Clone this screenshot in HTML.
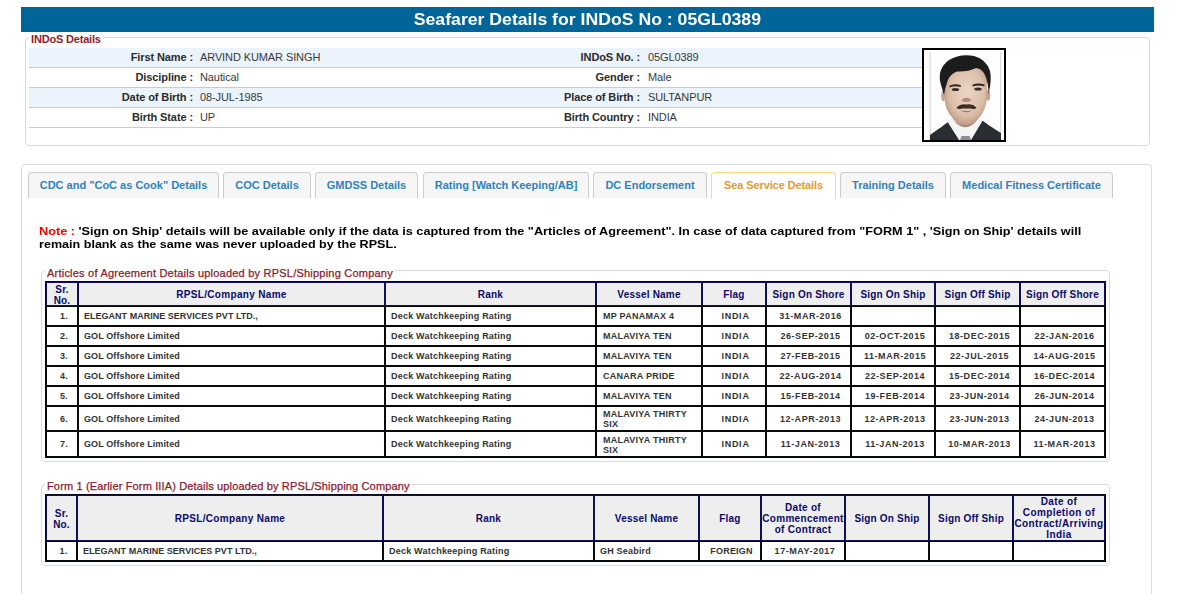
<!DOCTYPE html>
<html>
<head>
<meta charset="utf-8">
<title>Seafarer Details</title>
<style>
*{box-sizing:border-box;}
html,body{margin:0;padding:0;background:#fff;}
body{width:1194px;height:594px;overflow:hidden;position:relative;font-family:"Liberation Sans",sans-serif;font-size:11px;color:#222;}
.abs{position:absolute;}
#title{left:21px;top:7px;width:1133px;height:25px;background:#006699;color:#fff;font-weight:bold;font-size:16px;text-align:center;line-height:25px;}
#title span{display:inline-block;transform:scaleX(1.103);transform-origin:50% 50%;white-space:nowrap;}
#fs1{left:25px;top:37px;width:1125px;height:109px;border:1px solid #d9dbe0;border-radius:4px;}
#lg1{left:29px;top:33px;padding:0 2px;background:#fff;color:#8f1b2d;font-weight:bold;font-size:11px;line-height:13px;letter-spacing:-.18px;white-space:nowrap;}
.irow{left:29px;width:893px;height:20px;border-bottom:1px solid #ccc;}
.irow.alt{background:#ebf3fc;}
.irow span{position:absolute;top:0;line-height:19px;white-space:nowrap;letter-spacing:-.1px;}
.irow .l{font-weight:bold;color:#2c2c2c;text-align:right;}
.irow .l1{right:729px;}
.irow .l2{right:282px;}
.irow .v{color:#3a3a3a;}
.irow .v1{left:171px;}
.irow .v2{left:619px;}
#photo{left:922px;top:48px;width:84px;height:94px;border:2px solid #000;background:#fff;overflow:hidden;}
#tabs{left:21px;top:164px;width:1131px;height:460px;border:1px solid #dcdde0;border-radius:4px;}
.tab{top:172px;height:26px;border:1px solid #ccc;border-bottom:none;border-radius:4px 4px 0 0;background:#f6f6f6;color:#2e83bd;font-weight:bold;font-size:11px;line-height:25px;text-align:center;white-space:nowrap;}
.tab.act{background:#fff;border-color:#f8db7e;color:#e59a2e;height:27px;letter-spacing:-.1px;}
#note{left:39px;top:225px;width:1080px;font-weight:bold;font-size:11.3px;line-height:13px;color:#000;}
#note .nl{white-space:nowrap;transform-origin:0 0;height:13px;}
#note b{color:#f00;}
.fs{border:1px solid #d9dbe0;border-radius:4px;}
.lg{padding:0 2px;background:#fff;color:#8a1a2b;-webkit-text-stroke:.25px #8a1a2b;font-size:11px;line-height:13px;letter-spacing:.19px;white-space:nowrap;}
table.g{position:absolute;border-collapse:separate;border-spacing:0;border:1px solid #08081c;table-layout:fixed;font-weight:bold;}
table.g th{background:#eee;border:1px solid #101058;color:#0a0a66;font-size:10px;line-height:11px;padding:0;text-align:center;vertical-align:middle;letter-spacing:.2px;}
table.g td{background:#fff;border:1px solid #0a0a0a;color:#333;font-size:9px;line-height:10px;padding:0 0 0 5px;text-align:left;vertical-align:middle;letter-spacing:.2px;}
table.g td.n{text-align:center;padding:0 0 0 4px;}
table.g td.c{text-align:center;padding:0;}
table.g td.u{letter-spacing:.02px;}
table.g td.g{letter-spacing:.1px;}
table.g td.d{letter-spacing:.55px;text-align:center;padding:0 0 0 4px;}
table.g td.f{letter-spacing:.75px;text-align:center;padding:0 0 0 3px;}
table.g td.v{letter-spacing:.25px;padding-left:6px;}
table.g td.r{letter-spacing:.22px;}
</style>
</head>
<body>
<div id="title" class="abs"><span>Seafarer Details for INDoS No : 05GL0389</span></div>

<div id="fs1" class="abs"></div>
<div id="lg1" class="abs">INDoS Details</div>
<div class="abs irow alt" style="top:48px"><span class="l l1">First Name :</span><span class="v v1">ARVIND KUMAR SINGH</span><span class="l l2">INDoS No. :</span><span class="v v2">05GL0389</span></div>
<div class="abs irow" style="top:68px"><span class="l l1">Discipline :</span><span class="v v1">Nautical</span><span class="l l2">Gender :</span><span class="v v2">Male</span></div>
<div class="abs irow alt" style="top:88px"><span class="l l1">Date of Birth :</span><span class="v v1">08-JUL-1985</span><span class="l l2">Place of Birth :</span><span class="v v2">SULTANPUR</span></div>
<div class="abs irow" style="top:108px"><span class="l l1">Birth State :</span><span class="v v1">UP</span><span class="l l2">Birth Country :</span><span class="v v2">INDIA</span></div>
<div id="photo" class="abs"><svg width="80" height="90" viewBox="0 0 80 90" style="display:block">
<defs>
<radialGradient id="sk" cx="52%" cy="42%" r="62%"><stop offset="0" stop-color="#ead6c6"/><stop offset=".65" stop-color="#dcbfaa"/><stop offset="1" stop-color="#b48f79"/></radialGradient>
<filter id="bl" x="-10%" y="-10%" width="120%" height="120%"><feGaussianBlur stdDeviation=".55"/></filter>
</defs>
<rect width="80" height="90" fill="#fdfdfd"/>
<rect x="5.5" y="2" width="1.2" height="88" fill="#d9d9dc"/>
<rect x="76" y="2" width="1.2" height="88" fill="#dcdce0"/>
<g filter="url(#bl)">
<path d="M6 90 L6 85 Q10 82 16 78 L24 72 L28 70 L53 69 L59 71 L66 76 Q72 80 77 83 L77 90 Z" fill="#2c2d32"/>
<path d="M23 71 L29 67 L53 67 L59 70 L47 90 L35 90 Z" fill="#f4f4f7"/>
<path d="M37.5 86 L45.5 86 L47 90 L36 90 Z" fill="#8d8d96"/>
<path d="M29 58 L54 58 L54 69 Q41 80 29 69 Z" fill="#c5a089"/>
<path d="M20.5 30 Q21 17 41 16 Q62.5 17 63 30 L63 48 Q62 60 55 68 Q48 76.5 41.5 76.5 Q35 76.5 28.5 68 Q21 60 20.5 48 Z" fill="url(#sk)"/>
<ellipse cx="19.3" cy="46" rx="2" ry="5.2" fill="#c7a28c"/>
<ellipse cx="64.2" cy="45.5" rx="2" ry="5.2" fill="#c7a28c"/>
<path d="M20 45 Q18 38 16.5 33 Q13 19 25 10 Q36 3.5 50 6 Q62 9 66 21 Q68 30 64.5 44 Q64.5 33 61 25 Q58 18.5 52 18 Q44 22 33 21.5 Q26 24 23.5 31 Q21 38 20 45 Z" fill="#1b1b1d"/>
<path d="M25.5 35.8 Q31 32.8 36.8 35.3 L36.8 37 Q31 35.3 25.5 37.4 Z" fill="#2a211e"/>
<path d="M48.5 34.8 Q55 32.3 60.5 34.8 L60.5 36.4 Q55 34.6 48.5 36.6 Z" fill="#2a211e"/>
<ellipse cx="31.5" cy="39.5" rx="3.7" ry="1.5" fill="#3a2c28"/>
<ellipse cx="54" cy="39.1" rx="3.7" ry="1.5" fill="#3a2c28"/>
<path d="M37.5 50.5 Q42 53.5 47.5 50.5 Q45.5 47 42.5 48 Q39.5 47 37.5 50.5 Z" fill="#b48c78"/>
<path d="M32.5 57.5 Q37 53 42.5 54.5 Q48 53 52.5 57.5 Q51 60 47 58.5 L38 58.5 Q34 60 32.5 57.5 Z" fill="#3b2b27"/>
<path d="M36.5 60 Q42.5 62.5 48.5 60 Q42.5 64.5 36.5 60 Z" fill="#a2625a"/>
<path d="M30 71 Q41.5 80 53 70 Q48 77 41.5 77.2 Q35 77 30 71 Z" fill="#a98872"/>
</g>
</svg></div>

<div id="tabs" class="abs"></div>
<div class="abs tab" style="left:28px;width:191px">CDC and "CoC as Cook" Details</div>
<div class="abs tab" style="left:223px;width:88px">COC Details</div>
<div class="abs tab" style="left:315px;width:103px">GMDSS Details</div>
<div class="abs tab" style="left:423px;width:166px">Rating [Watch Keeping/AB]</div>
<div class="abs tab" style="left:593px;width:114px">DC Endorsement</div>
<div class="abs tab act" style="left:711px;width:125px">Sea Service Details</div>
<div class="abs tab" style="left:840px;width:106px">Training Details</div>
<div class="abs tab" style="left:950px;width:163px">Medical Fitness Certificate</div>

<div id="note" class="abs"><div class="nl" style="transform:scaleX(1.1245)"><b>Note :</b> 'Sign on Ship' details will be available only if the data is captured from the "Articles of Agreement". In case of data captured from "FORM 1" , 'Sign on Ship' details will</div><div class="nl" style="transform:scaleX(1.1126)">remain blank as the same was never uploaded by the RPSL.</div></div>

<div class="abs fs" style="left:41px;top:270px;width:1069px;height:192px"></div>
<div class="abs lg" style="left:45px;top:267px;letter-spacing:.22px">Articles of Agreement Details uploaded by RPSL/Shipping Company</div>
<table class="g" style="left:45px;top:281px;width:1061px">
<colgroup><col style="width:32px"><col style="width:307px"><col style="width:211px"><col style="width:106px"><col style="width:64px"><col style="width:85px"><col style="width:84px"><col style="width:85px"><col style="width:85px"></colgroup>
<tr style="height:24px"><th><span style="position:relative;top:.6px">Sr.<br>No.</span></th><th style="letter-spacing:.32px">RPSL/Company Name</th><th>Rank</th><th>Vessel Name</th><th>Flag</th><th>Sign On Shore</th><th>Sign On Ship</th><th>Sign Off Ship</th><th>Sign Off Shore</th></tr>
<tr style="height:20px"><td class="n">1.</td><td class="u">ELEGANT MARINE SERVICES PVT LTD.,</td><td class="r">Deck Watchkeeping Rating</td><td class="v">MP PANAMAX 4</td><td class="f">INDIA</td><td class="d">31-MAR-2016</td><td class="c"></td><td class="c"></td><td class="c"></td></tr>
<tr style="height:20px"><td class="n">2.</td><td class="g">GOL Offshore Limited</td><td class="r">Deck Watchkeeping Rating</td><td class="v">MALAVIYA TEN</td><td class="f">INDIA</td><td class="d">26-SEP-2015</td><td class="d">02-OCT-2015</td><td class="d">18-DEC-2015</td><td class="d">22-JAN-2016</td></tr>
<tr style="height:20px"><td class="n">3.</td><td class="g">GOL Offshore Limited</td><td class="r">Deck Watchkeeping Rating</td><td class="v">MALAVIYA TEN</td><td class="f">INDIA</td><td class="d">27-FEB-2015</td><td class="d">11-MAR-2015</td><td class="d">22-JUL-2015</td><td class="d">14-AUG-2015</td></tr>
<tr style="height:20px"><td class="n">4.</td><td class="g">GOL Offshore Limited</td><td class="r">Deck Watchkeeping Rating</td><td class="v">CANARA PRIDE</td><td class="f">INDIA</td><td class="d">22-AUG-2014</td><td class="d">22-SEP-2014</td><td class="d">15-DEC-2014</td><td class="d">16-DEC-2014</td></tr>
<tr style="height:20px"><td class="n">5.</td><td class="g">GOL Offshore Limited</td><td class="r">Deck Watchkeeping Rating</td><td class="v">MALAVIYA TEN</td><td class="f">INDIA</td><td class="d">15-FEB-2014</td><td class="d">19-FEB-2014</td><td class="d">23-JUN-2014</td><td class="d">26-JUN-2014</td></tr>
<tr style="height:25px"><td class="n">6.</td><td class="g">GOL Offshore Limited</td><td class="r">Deck Watchkeeping Rating</td><td class="v">MALAVIYA THIRTY<br>SIX</td><td class="f">INDIA</td><td class="d">12-APR-2013</td><td class="d">12-APR-2013</td><td class="d">23-JUN-2013</td><td class="d">24-JUN-2013</td></tr>
<tr style="height:26px"><td class="n">7.</td><td class="g">GOL Offshore Limited</td><td class="r">Deck Watchkeeping Rating</td><td class="v" style="padding-top:2px">MALAVIYA THIRTY<br>SIX</td><td class="f">INDIA</td><td class="d">11-JAN-2013</td><td class="d">11-JAN-2013</td><td class="d">10-MAR-2013</td><td class="d">11-MAR-2013</td></tr>
</table>

<div class="abs fs" style="left:41px;top:484px;width:1069px;height:82px"></div>
<div class="abs lg" style="left:45px;top:480px;letter-spacing:.145px">Form 1 (Earlier Form IIIA) Details uploaded by RPSL/Shipping Company</div>
<table class="g" style="left:45px;top:494px;width:1061px">
<colgroup><col style="width:31px"><col style="width:306px"><col style="width:211px"><col style="width:105px"><col style="width:62px"><col style="width:84px"><col style="width:84px"><col style="width:84px"><col style="width:92px"></colgroup>
<tr style="height:46px"><th><span style="position:relative;top:.6px">Sr.<br>No.</span></th><th style="letter-spacing:.32px">RPSL/Company Name</th><th>Rank</th><th>Vessel Name</th><th>Flag</th><th style="letter-spacing:.3px">Date of<br>Commencement<br>of Contract</th><th>Sign On Ship</th><th>Sign Off Ship</th><th style="letter-spacing:.4px">Date of<br>Completion of<br>Contract/Arriving<br>India</th></tr>
<tr style="height:20px"><td class="n">1.</td><td class="u">ELEGANT MARINE SERVICES PVT LTD.,</td><td class="r">Deck Watchkeeping Rating</td><td>GH Seabird</td><td class="c" style="padding-left:3px">FOREIGN</td><td class="d">17-MAY-2017</td><td class="c"></td><td class="c"></td><td class="c"></td></tr>
</table>
</body>
</html>
